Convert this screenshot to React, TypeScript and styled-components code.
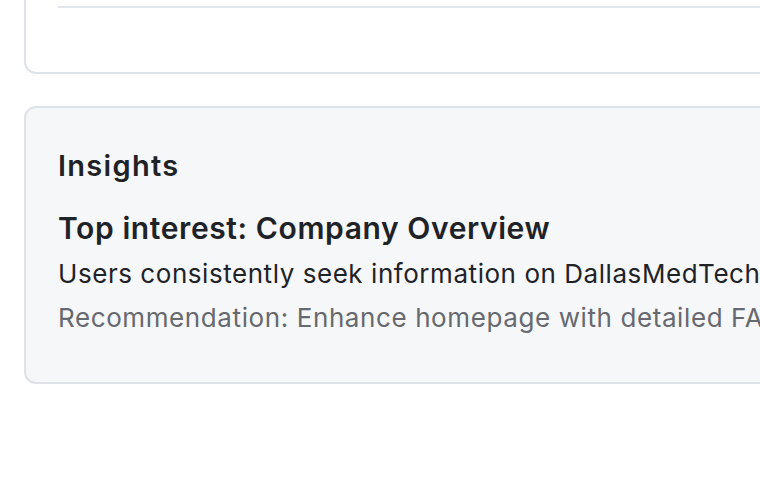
import React from "react";
import styled, { createGlobalStyle } from "styled-components";

const Global = createGlobalStyle`
  html, body { margin: 0; padding: 0; background: #ffffff; }
  body { font-family: Inter, "Noto Sans", sans-serif; overflow: hidden; }
`;

const Page = styled.div`
  width: 760px;
  height: 484px;
  overflow: hidden;
  padding-left: 24px;
  box-sizing: border-box;
  display: flex;
  flex-direction: column;
  gap: 32px;
`;

const Card = styled.section<{ $muted?: boolean; $open?: boolean }>`
  width: 1000px;
  box-sizing: border-box;
  border: 2px solid #dfe2e6;
  border-top: ${(p) => (p.$open ? "none" : "2px solid #dfe2e6")};
  border-radius: ${(p) => (p.$open ? "0 0 12px 12px" : "12px")};
  background: ${(p) => (p.$muted ? "#f6f7f9" : "#ffffff")};
  padding: ${(p) => (p.$open ? "6px 32px 64px" : "40px 32px 42px")};
  flex-shrink: 0;
`;

const Divider = styled.div`
  height: 2px;
  background: #e1e4e8;
`;

const Heading = styled.h3`
  margin: 0 0 25px;
  font-size: 29px;
  line-height: 36px;
  font-weight: 600;
  letter-spacing: 1.3px;
  color: #1f2328;
`;

const Title = styled.h4`
  margin: 0 0 5px;
  font-size: 30px;
  line-height: 38px;
  font-weight: 600;
  letter-spacing: 0.6px;
  color: #1f2328;
  white-space: nowrap;
`;

const Text = styled.p<{ $muted?: boolean }>`
  margin: 0;
  font-size: 26px;
  line-height: 44px;
  font-weight: 400;
  letter-spacing: ${(p) => (p.$muted ? "0.6px" : "0.55px")};
  color: ${(p) => (p.$muted ? "#66696f" : "#1f2328")};
  white-space: nowrap;
`;

export default function App() {
  return (
    <>
      <Global />
      <Page>
        <Card $open>
          <Divider />
        </Card>
        <Card $muted>
          <Heading>Insights</Heading>
          <Title>Top interest: Company Overview</Title>
          <Text>Users consistently seek information on DallasMedTech's company overview and services.</Text>
          <Text $muted>Recommendation: Enhance homepage with detailed FAQ and company overview content.</Text>
        </Card>
      </Page>
    </>
  );
}
